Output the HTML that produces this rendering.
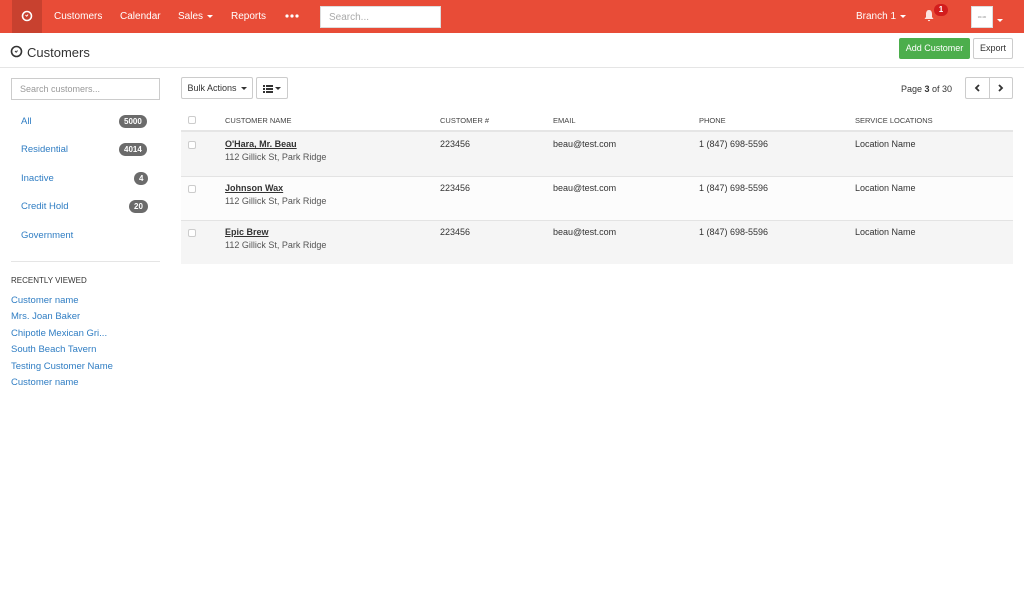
<!DOCTYPE html>
<html><head><meta charset="utf-8"><style>
*{box-sizing:border-box;margin:0;padding:0}
body{width:1024px;height:589px;background:#fff;font-family:"Liberation Sans",sans-serif;color:#333;position:relative;overflow:hidden}
.nav{position:absolute;left:0;top:0;width:1024px;height:33px;background:#e84c37}
.abs{position:absolute}
.nav .t{color:#fff;font-size:10px;top:11px}
.logo{left:12px;top:0;width:30px;height:33px;background:#c8412f}
.caret{display:inline-block;width:0;height:0;border-left:3px solid transparent;border-right:3px solid transparent;border-top:3px solid currentColor;vertical-align:middle;margin-left:4px}
.search{left:320px;top:6px;width:121px;height:22px;background:#fff;border:1px solid #ddd;font-size:10px;color:#aaa;padding:5px 8px}
.lnk{color:#2f7dc3;font-size:9.5px}
.badge{background:#6b6b6b;color:#fff;font-size:8px;font-weight:bold;border-radius:7px;height:13px;line-height:13px;padding:0 5px;text-align:center}
.btn{border:1px solid #ccc;border-radius:2px;background:#fff;font-size:9px;color:#333;text-align:center}
.th{font-size:7.5px;color:#444;top:116px}
.cell{font-size:9px;color:#333}
.cb{width:8px;height:8px;border:1px solid #ccc;border-radius:2px;background:#fff}
</style></head><body>
<div class="nav">
 <div class="abs logo"><svg width="30" height="33"><circle cx="15" cy="16" r="4.5" fill="none" stroke="#fff" stroke-width="1.6"/><path d="M13.5 15l1.5 1.5M16 14.5l-1 1.5" stroke="#fff" stroke-width="1"/></svg></div>
 <div class="abs t" style="left:54px">Customers</div>
 <div class="abs t" style="left:120px">Calendar</div>
 <div class="abs t" style="left:178px">Sales<span class="caret"></span></div>
 <div class="abs t" style="left:231px">Reports</div>
 <svg class="abs" style="left:285px;top:14px" width="14" height="4"><circle cx="2" cy="2" r="1.6" fill="#fff"/><circle cx="7" cy="2" r="1.6" fill="#fff"/><circle cx="12" cy="2" r="1.6" fill="#fff"/></svg>
 <div class="abs search">Search...</div>
 <div class="abs t" style="left:856px">Branch 1<span class="caret"></span></div>
 <svg class="abs" style="left:923px;top:9px" width="12" height="13"><path d="M6 1C3.5 1 3 3.5 3 5v3L1.5 10h9L9 8V5C9 3.5 8.5 1 6 1zM4.8 11a1.2 1.2 0 0 0 2.4 0z" fill="#fff" opacity=".85"/></svg>
 <div class="abs" style="left:934px;top:4px;width:14px;height:12px;border-radius:6px;background:#d21d1d;color:#fff;font-size:8px;font-weight:bold;text-align:center;line-height:12px">1</div>
 <div class="abs" style="left:971px;top:6px;width:22px;height:22px;background:#fff;border:1px solid #ddd;font-size:3px;color:#888;text-align:center;line-height:20px">30×30</div>
 <div class="abs" style="left:997px;top:12px;color:#fff"><span class="caret" style="margin:0"></span></div>
</div>
<svg class="abs" style="left:10px;top:45px" width="13" height="13"><circle cx="6.5" cy="6.5" r="5" fill="none" stroke="#333" stroke-width="1.6"/><path d="M5 6l1.5 1.5M7.5 5.5l-1 1.5" stroke="#333" stroke-width="1"/></svg>
<div class="abs" style="left:27px;top:45px;font-size:13px;color:#333">Customers</div>
<div class="abs" style="left:899px;top:38px;width:71px;height:21px;background:#4cae4c;border-radius:2px;color:#fff;font-size:9px;text-align:center;line-height:21px">Add Customer</div>
<div class="abs btn" style="left:973px;top:38px;width:40px;height:21px;line-height:19px">Export</div>
<div class="abs" style="left:0;top:67px;width:1024px;height:1px;background:#e5e5e5"></div>

<div class="abs" style="left:11px;top:78px;width:149px;height:22px;border:1px solid #ccc;font-size:9px;color:#999;padding:5px 8px">Search customers...</div>
<div class="abs lnk" style="left:21px;top:116px">All</div><div class="abs badge" style="left:119px;top:115px">5000</div>
<div class="abs lnk" style="left:21px;top:144px">Residential</div><div class="abs badge" style="left:119px;top:143px">4014</div>
<div class="abs lnk" style="left:21px;top:173px">Inactive</div><div class="abs badge" style="left:134px;top:172px">4</div>
<div class="abs lnk" style="left:21px;top:201px">Credit Hold</div><div class="abs badge" style="left:129px;top:200px">20</div>
<div class="abs lnk" style="left:21px;top:230px">Government</div>
<div class="abs" style="left:11px;top:261px;width:149px;height:1px;background:#e5e5e5"></div>
<div class="abs" style="left:11px;top:276px;font-size:8px;color:#333">RECENTLY VIEWED</div>
<div class="abs lnk" style="left:11px;top:295px">Customer name</div>
<div class="abs lnk" style="left:11px;top:311px">Mrs. Joan Baker</div>
<div class="abs lnk" style="left:11px;top:328px">Chipotle Mexican Gri...</div>
<div class="abs lnk" style="left:11px;top:344px">South Beach Tavern</div>
<div class="abs lnk" style="left:11px;top:361px">Testing Customer Name</div>
<div class="abs lnk" style="left:11px;top:377px">Customer name</div>

<div class="abs btn" style="left:181px;top:77px;width:72px;height:22px;line-height:20px">Bulk Actions<span class="caret"></span></div>
<div class="abs btn" style="left:256px;top:77px;width:32px;height:22px;line-height:20px"><svg width="10" height="8" style="vertical-align:middle"><path d="M0 0h2v2H0zM3 0h7v2H3zM0 3h2v2H0zM3 3h7v2H3zM0 6h2v2H0zM3 6h7v2H3z" fill="#333"/></svg><span class="caret" style="margin-left:2px"></span></div>
<div class="abs" style="left:901px;top:84px;font-size:9px">Page <b>3</b> of 30</div>
<div class="abs btn" style="left:965px;top:77px;width:48px;height:22px"></div>
<div class="abs" style="left:989px;top:77px;width:1px;height:22px;background:#ccc"></div>
<svg class="abs" style="left:974px;top:84px" width="6" height="8"><path d="M5 1L2 4l3 3" fill="none" stroke="#333" stroke-width="1.8"/></svg>
<svg class="abs" style="left:998px;top:84px" width="6" height="8"><path d="M1 1l3 3-3 3" fill="none" stroke="#333" stroke-width="1.8"/></svg>

<div class="abs cb" style="left:188px;top:116px"></div>
<div class="abs th" style="left:225px">CUSTOMER NAME</div>
<div class="abs th" style="left:440px">CUSTOMER #</div>
<div class="abs th" style="left:553px">EMAIL</div>
<div class="abs th" style="left:699px">PHONE</div>
<div class="abs th" style="left:855px">SERVICE LOCATIONS</div>
<div class="abs" style="left:181px;top:130px;width:832px;height:2px;background:#e5e5e5"></div>

<div class="abs" style="left:181px;top:132px;width:832px;height:44px;background:#f5f5f5"></div>
<div class="abs" style="left:181px;top:176px;width:832px;height:1px;background:#e3e3e3"></div>
<div class="abs" style="left:181px;top:177px;width:832px;height:43px;background:#fcfcfc"></div>
<div class="abs" style="left:181px;top:220px;width:832px;height:1px;background:#e3e3e3"></div>
<div class="abs" style="left:181px;top:221px;width:832px;height:43px;background:#f5f5f5"></div>

<div class="abs cb" style="left:188px;top:141px"></div>
<div class="abs cell" style="left:225px;top:139px;font-weight:bold;text-decoration:underline">O'Hara, Mr. Beau</div>
<div class="abs cell" style="left:225px;top:152px;color:#555">112 Gillick St, Park Ridge</div>
<div class="abs cell" style="left:440px;top:139px">223456</div>
<div class="abs cell" style="left:553px;top:139px">beau@test.com</div>
<div class="abs cell" style="left:699px;top:139px">1 (847) 698-5596</div>
<div class="abs cell" style="left:855px;top:139px">Location Name</div>

<div class="abs cb" style="left:188px;top:185px"></div>
<div class="abs cell" style="left:225px;top:183px;font-weight:bold;text-decoration:underline">Johnson Wax</div>
<div class="abs cell" style="left:225px;top:196px;color:#555">112 Gillick St, Park Ridge</div>
<div class="abs cell" style="left:440px;top:183px">223456</div>
<div class="abs cell" style="left:553px;top:183px">beau@test.com</div>
<div class="abs cell" style="left:699px;top:183px">1 (847) 698-5596</div>
<div class="abs cell" style="left:855px;top:183px">Location Name</div>

<div class="abs cb" style="left:188px;top:229px"></div>
<div class="abs cell" style="left:225px;top:227px;font-weight:bold;text-decoration:underline">Epic Brew</div>
<div class="abs cell" style="left:225px;top:240px;color:#555">112 Gillick St, Park Ridge</div>
<div class="abs cell" style="left:440px;top:227px">223456</div>
<div class="abs cell" style="left:553px;top:227px">beau@test.com</div>
<div class="abs cell" style="left:699px;top:227px">1 (847) 698-5596</div>
<div class="abs cell" style="left:855px;top:227px">Location Name</div>
</body></html>
